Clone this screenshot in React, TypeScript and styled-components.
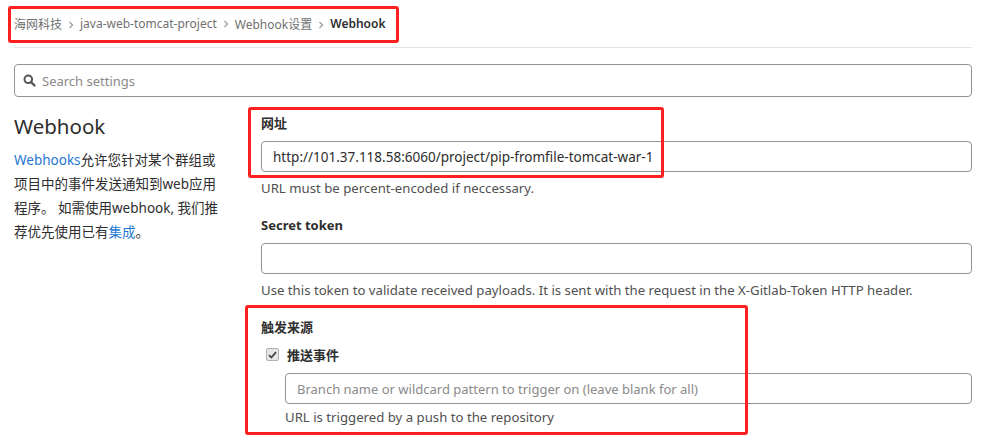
import styled, { createGlobalStyle } from 'styled-components';

const GlobalStyle = createGlobalStyle`
  body {
    margin: 0;
    background: #fff;
    font-family: 'Noto Sans', 'Noto Sans CJK SC', sans-serif;
    color: #2e2e2e;
  }
`;

const Page = styled.div`
  position: relative;
  width: 989px;
  height: 438px;
  overflow: hidden;
  padding: 0 17px 0 14px;
  box-sizing: border-box;
`;

const Breadcrumbs = styled.nav`
  display: flex;
  align-items: center;
  height: 47px;
  border-bottom: 1px solid #e5e5e5;
  font-size: 12px;
  color: #707070;
`;

const Crumb = styled.span<{ $current?: boolean }>`
  color: ${(p) => (p.$current ? '#2e2e2e' : '#707070')};
  font-weight: ${(p) => (p.$current ? 600 : 400)};
`;

const Chevron = styled.span`
  display: inline-flex;
  margin: 0 6px;
  color: #a0a0a0;
`;

const SearchBox = styled.div`
  display: flex;
  align-items: center;
  gap: 6px;
  margin-top: 16px;
  height: 31px;
  padding: 0 8px;
  border: 1px solid #939393;
  border-radius: 4px;
  font-size: 13px;
  color: #8a8a8a;
`;

const Settings = styled.section`
  display: grid;
  grid-template-columns: 232px 1fr;
  column-gap: 15px;
  margin-top: 15px;
`;

const Intro = styled.div``;

const Heading = styled.h4`
  margin: 0;
  font-size: 20.5px;
  font-weight: 400;
  line-height: 28px;
  color: #2e2e2e;
`;

const Description = styled.p`
  margin: 8px 0 0;
  width: 210px;
  font-size: 13.5px;
  line-height: 24px;
  color: #2e2e2e;
`;

const Link = styled.a`
  color: #1f78d1;
  text-decoration: none;
`;

const Form = styled.div`
  display: flex;
  flex-direction: column;
  padding-top: 2px;
`;

const Group = styled.div`
  margin-bottom: 19px;
`;

const Label = styled.label`
  display: block;
  font-size: 13px;
  font-weight: 700;
  line-height: 18px;
  margin-bottom: 9px;
`;

const Input = styled.div<{ $placeholder?: boolean }>`
  display: flex;
  align-items: center;
  height: 31px;
  box-sizing: border-box;
  padding: 0 11px;
  border: 1px solid #939393;
  border-radius: 4px;
  font-size: ${(p) => (p.$placeholder ? '13px' : '13.5px')};
  color: ${(p) => (p.$placeholder ? '#8a8a8a' : '#2e2e2e')};
`;

const Help = styled.p<{ $tight?: boolean }>`
  margin: ${(p) => (p.$tight ? '4px' : '7px')} 0 0;
  font-size: 13.2px;
  line-height: 18px;
  color: #505050;
`;

const CheckRow = styled.div`
  display: flex;
  align-items: center;
  gap: 8px;
  margin-left: 5px;
`;

const CheckBox = styled.span`
  display: inline-flex;
  align-items: center;
  justify-content: center;
  width: 11px;
  height: 11px;
  border: 1px solid #b0b0b0;
  border-radius: 2px;
  background: #e6e6e6;
`;

const CheckLabel = styled.span`
  font-size: 13px;
  font-weight: 700;
`;

const Nested = styled.div`
  margin: 9px 0 0 24px;
`;

const Mark = styled.div<{ $l: number; $t: number; $w: number; $h: number }>`
  position: absolute;
  left: ${(p) => p.$l}px;
  top: ${(p) => p.$t}px;
  width: ${(p) => p.$w}px;
  height: ${(p) => p.$h}px;
  box-sizing: border-box;
  border: 3px solid #ff1f1f;
  border-radius: 3px;
  pointer-events: none;
`;

const ChevronIcon = () => (
  <svg width="6" height="8" viewBox="0 0 6 8">
    <path d="M1.5 1 L4.5 4 L1.5 7" fill="none" stroke="currentColor" strokeWidth="1.3" />
  </svg>
);

const SearchIcon = () => (
  <svg width="13" height="13" viewBox="0 0 13 13">
    <circle cx="5.3" cy="5.3" r="3.8" fill="none" stroke="#555" strokeWidth="2" />
    <path d="M8 8 L11.5 11.5" stroke="#555" strokeWidth="2.4" strokeLinecap="round" />
  </svg>
);

const App = () => {
  const crumbs = ['海网科技', 'java-web-tomcat-project', 'Webhook设置'];
  return (
    <Page>
      <GlobalStyle />
      <Breadcrumbs>
        {crumbs.map((c) => (
          <span key={c}>
            <Crumb>{c}</Crumb>
            <Chevron>
              <ChevronIcon />
            </Chevron>
          </span>
        ))}
        <Crumb $current>Webhook</Crumb>
      </Breadcrumbs>

      <SearchBox>
        <SearchIcon />
        Search settings
      </SearchBox>

      <Settings>
        <Intro>
          <Heading>Webhook</Heading>
          <Description>
            <Link>Webhooks</Link>允许您针对某个群组或项目中的事件发送通知到web应用程序。 如需使用webhook, 我们推荐优先使用已有<Link>集成</Link>。
          </Description>
        </Intro>

        <Form>
          <Group>
            <Label>网址</Label>
            <Input>http://101.37.118.58:6060/project/pip-fromfile-tomcat-war-1</Input>
            <Help>URL must be percent-encoded if neccessary.</Help>
          </Group>
          <Group>
            <Label>Secret token</Label>
            <Input />
            <Help>
              Use this token to validate received payloads. It is sent with the request in the X-Gitlab-Token HTTP header.
            </Help>
          </Group>
          <Group>
            <Label>触发来源</Label>
            <CheckRow>
              <CheckBox>
                <svg width="9" height="8" viewBox="0 0 9 8">
                  <path d="M1 4.2 L3.4 6.5 L8 1.2" fill="none" stroke="#444" strokeWidth="1.8" />
                </svg>
              </CheckBox>
              <CheckLabel>推送事件</CheckLabel>
            </CheckRow>
            <Nested>
              <Input $placeholder>Branch name or wildcard pattern to trigger on (leave blank for all)</Input>
              <Help $tight>URL is triggered by a push to the repository</Help>
            </Nested>
          </Group>
        </Form>
      </Settings>

      <Mark $l={8} $t={6} $w={391} $h={37} />
      <Mark $l={248} $t={107} $w={416} $h={71} />
      <Mark $l={245} $t={305} $w={503} $h={130} />
    </Page>
  );
};

export default App;
